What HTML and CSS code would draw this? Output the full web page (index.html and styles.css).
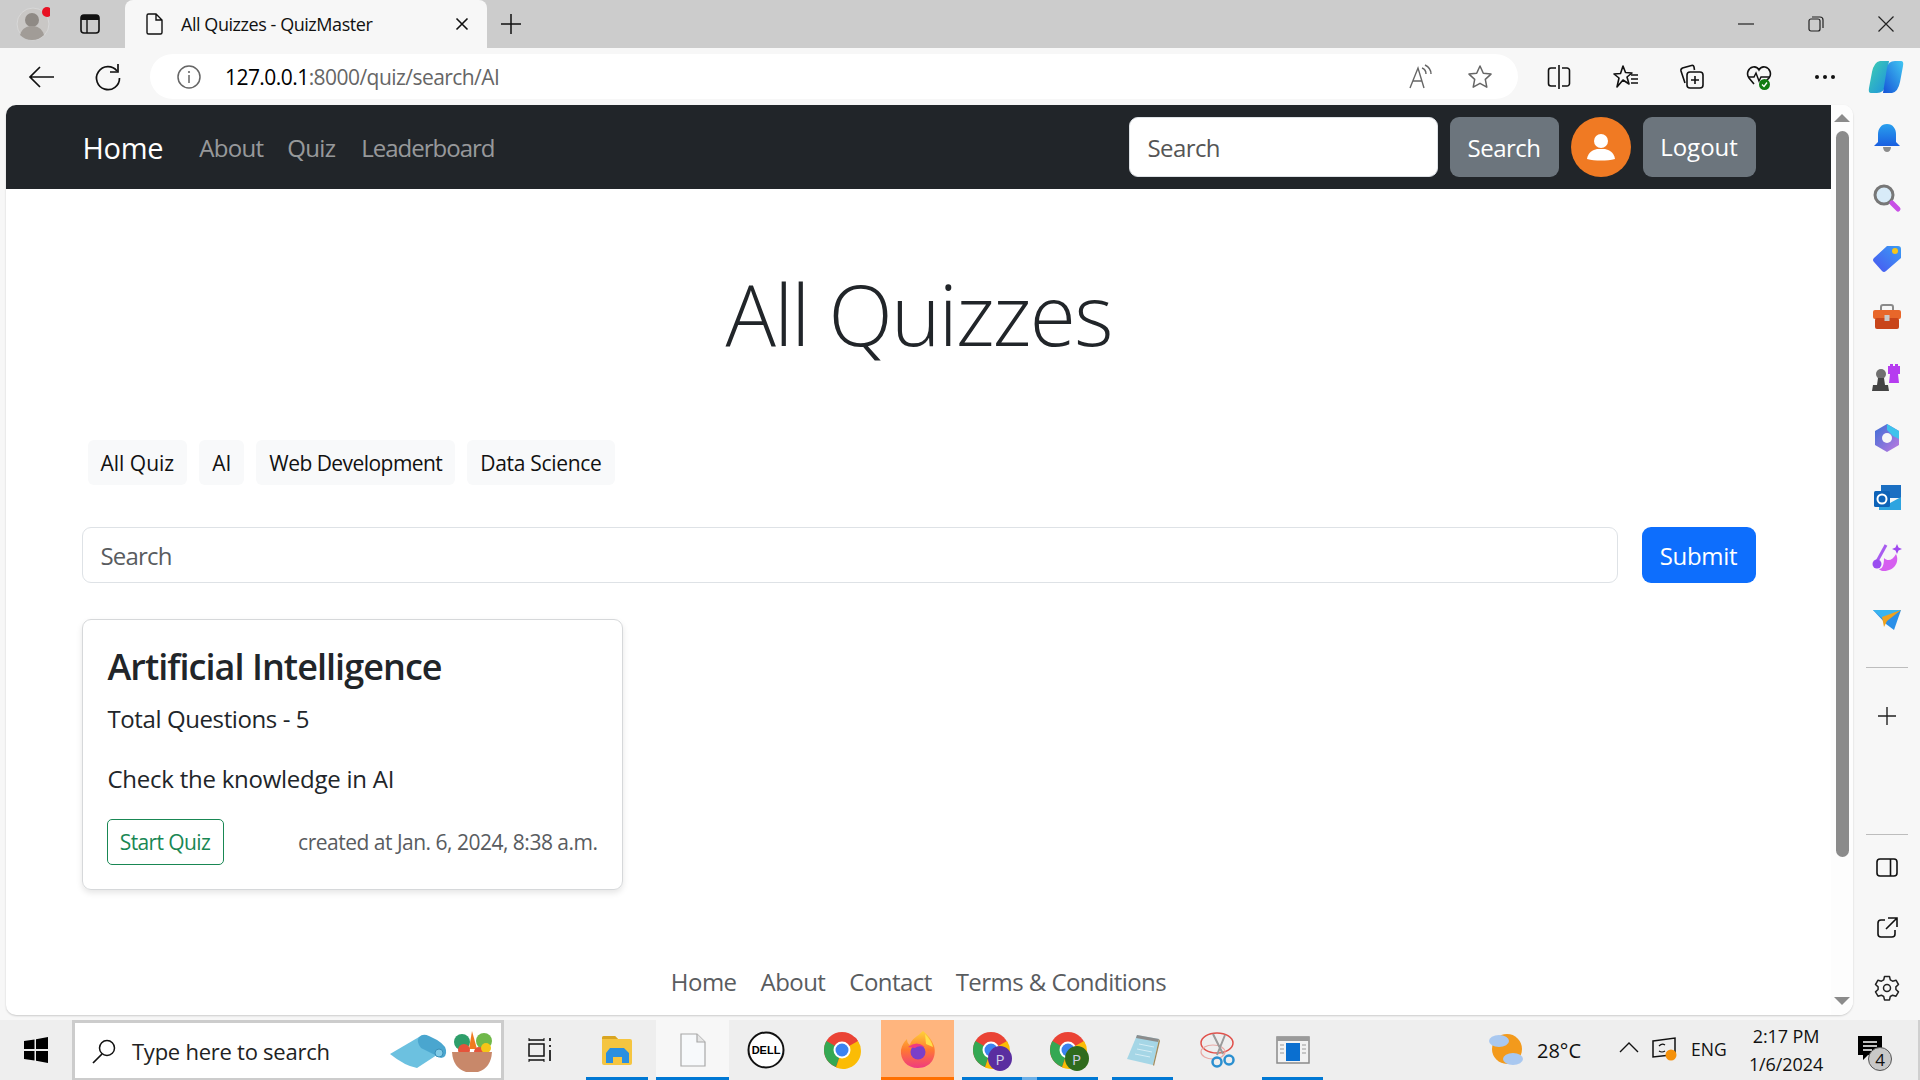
FILE: index.html
```html
<!DOCTYPE html>
<html lang="en">
<head>
<meta charset="utf-8">
<title>All Quizzes - QuizMaster</title>
<link rel="stylesheet" href="styles.css">
</head>
<body>
<div class="tabstrip">
  <div class="tab-avatar">
    <svg class="ico34" viewBox="0 0 34 34"><circle cx="17" cy="17" r="16" fill="#c9c7c5" stroke="#d8d8d8"/><circle cx="16" cy="13" r="7" fill="#8f8a85"/><path d="M4 28c2-7 7-9 12-9s10 2 12 9c-3 3-7 5-12 5s-9-2-12-5z" fill="#a19c97"/><circle cx="31" cy="5" r="5" fill="#e81123"/></svg>
  </div>
  <div class="tab-actions">
    <svg class="ico24" viewBox="0 0 24 24"><rect x="3" y="3" width="18" height="18" rx="3" fill="none" stroke="#111" stroke-width="1.6"/><path d="M3 6a3 3 0 0 1 3-3h12a3 3 0 0 1 3 3v2H3z" fill="#111"/><path d="M9 8v13" stroke="#111" stroke-width="1.4"/></svg>
  </div>
  <div class="tab">
    <svg class="ico24" viewBox="0 0 24 24"><path d="M5 3.5a1.5 1.5 0 0 1 1.5-1.500H14l6 6v12.500a1.500 1.500 0 0 1-1.500 1.500h-12A1.500 1.500 0 0 1 5 20.500zM14 2v6h6" fill="none" stroke="#111" stroke-width="1.4"/></svg>
    <span class="tab-title">All Quizzes - QuizMaster</span>
    <svg class="ico14" viewBox="0 0 14 14"><path d="M1.500 1.500l11 11M12.500 1.500l-11 11" stroke="#111" stroke-width="1.600"/></svg>
  </div>
  <div class="tab-new">
    <svg class="ico24" viewBox="0 0 24 24"><path d="M12 2v20M2 12h20" stroke="#111" stroke-width="1.500"/></svg>
  </div>
  <div class="win-controls">
    <svg class="ico16" viewBox="0 0 16 16"><path d="M0 8h16" stroke="#222" stroke-width="1.200"/></svg>
    <svg class="ico16" viewBox="0 0 16 16"><rect x="1" y="3" width="11" height="12" rx="2" fill="none" stroke="#222" stroke-width="1.200"/><path d="M4 1h8a3 3 0 0 1 3 3v8" fill="none" stroke="#222" stroke-width="1.200"/></svg>
    <svg class="ico16" viewBox="0 0 16 16"><path d="M0.500 0.500l15 15M15.500 0.500l-15 15" stroke="#222" stroke-width="1.200"/></svg>
  </div>
</div>

<div class="toolbar">
  <div class="tool-nav">
    <svg class="ico30" viewBox="0 0 30 30"><path d="M27 15H3M13 5L3 15l10 10" fill="none" stroke="#111" stroke-width="1.700"/></svg>
    <svg class="ico30" viewBox="0 0 30 30"><path d="M24 9a11.500 11.500 0 1 0 2.500 7" fill="none" stroke="#111" stroke-width="1.700"/><path d="M25 2v8h-8" fill="none" stroke="#111" stroke-width="1.700"/></svg>
  </div>
  <div class="addressbar">
    <svg class="ico26" viewBox="0 0 26 26"><circle cx="13" cy="13" r="11" fill="none" stroke="#666" stroke-width="1.500"/><path d="M13 11v8" stroke="#666" stroke-width="1.500"/><circle cx="13" cy="8" r="1.100" fill="#666"/></svg>
    <div class="url"><span class="url-host">127.0.0.1</span>:8000/quiz/search/AI</div>
    <svg class="ico26 read-ico" viewBox="0 0 26 26"><path d="M2 24L10 4l6 20M5 17h9" fill="none" stroke="#666" stroke-width="1.400"/><path d="M14 4c3 1 4 3 4 6M17 1c4 2 6 5 6 9" fill="none" stroke="#666" stroke-width="1.400"/></svg>
    <svg class="ico26 star-ico" viewBox="0 0 26 26"><path d="M13 2l3.300 7.200 7.700.9-5.700 5.300 1.500 7.800L13 19.300l-6.800 3.900 1.500-7.800L2 10.100l7.700-.9z" fill="none" stroke="#666" stroke-width="1.500" stroke-linejoin="round"/></svg>
  </div>
  <div class="tool-right">
    <div class="tool-slot"><svg class="ico26" viewBox="0 0 26 26"><path d="M10 4H5a2.500 2.500 0 0 0-2.500 2.500v13A2.500 2.500 0 0 0 5 22h5M16 4h5a2.500 2.500 0 0 1 2.500 2.500v13A2.500 2.500 0 0 1 21 22h-5M13 1v24" fill="none" stroke="#111" stroke-width="1.600"/></svg></div>
    <div class="tool-slot"><svg class="ico26" viewBox="0 0 26 26"><path d="M10 2l2.500 6.500L19 9l-5 4 2 7-6-4-6 7 2-9-5-4 6.500-.5z" fill="none" stroke="#111" stroke-width="1.600" stroke-linejoin="round"/><path d="M18 11h7M18 15h7M18 19h7" stroke="#111" stroke-width="1.600"/></svg></div>
    <div class="tool-slot"><svg class="ico26" viewBox="0 0 26 26"><path d="M6 19L2 7q-.5-2 1.500-3l9-2.500q2-.5 2.500 1.500l.5 3" fill="none" stroke="#111" stroke-width="1.600"/><rect x="8" y="8" width="16" height="16" rx="3" fill="#f7f7f7" stroke="#111" stroke-width="1.600"/><path d="M16 12v8M12 16h8" stroke="#111" stroke-width="1.600"/></svg></div>
    <div class="tool-slot"><svg class="ico26" viewBox="0 0 26 26"><path d="M8 20L3 14C0 10 2 4 7 3c3-.5 5 1 6 3 1-2 3-3.500 6-3 5 1 7 7 4 11l-4 4" fill="none" stroke="#111" stroke-width="1.600"/><path d="M2 13h6l2-4 3 8 2-4h8" fill="none" stroke="#111" stroke-width="1.500"/><circle cx="18.500" cy="20.500" r="5.500" fill="#107c10"/><path d="M16 20.500l2 2 3-4" fill="none" stroke="#fff" stroke-width="1.300"/></svg></div>
    <div class="tool-slot"><svg class="ico26" viewBox="0 0 26 26"><circle cx="5" cy="13" r="2" fill="#111"/><circle cx="13" cy="13" r="2" fill="#111"/><circle cx="21" cy="13" r="2" fill="#111"/></svg></div>
    <div class="tool-slot tool-copilot"><svg class="ico36" viewBox="0 0 36 36"><defs><linearGradient id="cpa" x1="0" y1="0" x2="1" y2="1"><stop offset="0" stop-color="#3fd0b0"/><stop offset="1" stop-color="#1d8fe0"/></linearGradient><linearGradient id="cpb" x1="0" y1="1" x2="1" y2="0"><stop offset="0" stop-color="#1553d8"/><stop offset="1" stop-color="#41c7f2"/></linearGradient></defs><path d="M12 2h9l-4 25q-1 7-8 7H3q-3 0-2-5l3-16Q6 3 12 2z" fill="url(#cpa)"/><path d="M24 34h-9l4-25q1-7 8-7h6q3 0 2 5l-3 16q-2 10-8 11z" fill="url(#cpb)"/></svg></div>
  </div>
</div>

<div class="window-body">
  <div class="viewport">
    <div class="page">
      <nav class="navbar">
        <div class="container nav-inner">
          <a class="brand">Home</a>
          <a class="nav-link">About</a>
          <a class="nav-link">Quiz</a>
          <a class="nav-link nav-lead">Leaderboard</a>
          <div class="nav-right">
            <div class="nav-search">Search</div>
            <div class="btn-gray btn-search">Search</div>
            <div class="avatar">
              <svg class="ico30" viewBox="0 0 30 30"><circle cx="15" cy="9" r="7" fill="#fff"/><path d="M1 27c1-7 6-9 10-10h8c4 1 9 3 10 10-8 2-20 2-28 0z" fill="#fff"/></svg>
            </div>
            <div class="btn-gray btn-logout">Logout</div>
          </div>
        </div>
      </nav>
      <main class="container">
        <h1 class="title">All Quizzes</h1>
        <div class="pills">
          <span class="pill">All Quiz</span>
          <span class="pill">AI</span>
          <span class="pill pill-w">Web Development</span>
          <span class="pill pill-d">Data Science</span>
        </div>
        <div class="search-row">
          <div class="search-input">Search</div>
          <div class="btn-submit">Submit</div>
        </div>
        <div class="card">
          <h2 class="card-title">Artificial Intelligence</h2>
          <p class="card-count">Total Questions - 5</p>
          <p class="card-desc">Check the knowledge in AI</p>
          <div class="card-foot">
            <span class="btn-start">Start Quiz</span>
            <span class="created">created at Jan. 6, 2024, 8:38 a.m.</span>
          </div>
        </div>
      </main>
      <footer class="footer">
        <a>Home</a><a>About</a><a>Contact</a><a>Terms &amp; Conditions</a>
      </footer>
    </div>
    <div class="scrollbar">
      <span class="arrow-up"></span>
      <span class="thumb"></span>
      <span class="arrow-down"></span>
    </div>
  </div>
  <aside class="sidebar">
    <div class="side-slot"><svg class="ico30" viewBox="0 0 30 30"><defs><linearGradient id="bell" x1="0" y1="0" x2="0" y2="1"><stop offset="0" stop-color="#29a0ee"/><stop offset="1" stop-color="#1a5fe0"/></linearGradient></defs><path d="M15 1c6 0 9 5 9 10v8l4 4H2l4-4v-8C6 6 9 1 15 1z" fill="url(#bell)"/><path d="M11 24h8c0 3-2 5-4 5s-4-2-4-5z" fill="#8c8c8c"/></svg></div>
    <div class="side-slot"><svg class="ico30" viewBox="0 0 30 30"><circle cx="12" cy="12" r="9" fill="#d8ebf8" stroke="#777" stroke-width="3"/><path d="M20 20l6 6" stroke="#c84fe6" stroke-width="5" stroke-linecap="round"/></svg></div>
    <div class="side-slot"><svg class="ico30" viewBox="0 0 30 30"><defs><linearGradient id="tag" x1="0" y1="1" x2="1" y2="0"><stop offset="0" stop-color="#4a55f0"/><stop offset="1" stop-color="#3a9df5"/></linearGradient></defs><path d="M15 3h11q3 0 3 3v9L14 28q-2 2-4 0L2 19q-2-2 0-4z" fill="url(#tag)"/><circle cx="23" cy="8" r="3" fill="#f5c518"/></svg></div>
    <div class="side-slot"><svg class="ico30" viewBox="0 0 30 30"><path d="M9 8V4q0-2 2-2h8q2 0 2 2v4" fill="none" stroke="#8a8a8a" stroke-width="2"/><rect x="1" y="7" width="28" height="9" rx="2" fill="#e8672a"/><rect x="3" y="15" width="24" height="11" rx="2" fill="#c8451a"/><rect x="12.500" y="12" width="5" height="6" fill="#c9c9c9"/></svg></div>
    <div class="side-slot"><svg class="ico30" viewBox="0 0 30 30"><path d="M18 1h3v2h2V1h3v2h2v8h-2l1 9h-10l1-9h-2V3h2z" fill="#b63cf0"/><circle cx="9" cy="11" r="5" fill="#707070"/><path d="M6 15h6l1 7h3l1 6H0l1-6h4z" fill="#444"/></svg></div>
    <div class="side-slot"><svg class="ico30" viewBox="0 0 30 30"><defs><linearGradient id="msa" x1="0" y1="0" x2="1" y2="1"><stop offset="0" stop-color="#3b6fd6"/><stop offset="1" stop-color="#c07ae0"/></linearGradient></defs><path d="M15 1l12 7v14l-12 7-12-7V8z" fill="url(#msa)"/><path d="M15 1l12 7v8l-6-3-6-6z" fill="#3ec2ec"/><circle cx="15" cy="15" r="5" fill="#f7f7f7"/></svg></div>
    <div class="side-slot"><svg class="ico30" viewBox="0 0 30 30"><rect x="9" y="2" width="20" height="13" fill="#1b6fc2"/><path d="M7 14l11 6 11-6v13H7z" fill="#2ea4e0"/><rect x="2" y="8" width="16" height="16" rx="1.500" fill="#0d63b8"/><circle cx="10" cy="16" r="4.500" fill="none" stroke="#fff" stroke-width="2"/></svg></div>
    <div class="side-slot"><svg class="ico30" viewBox="0 0 30 30"><path d="M3 22L14 2" stroke="#a95cf0" stroke-width="3"/><circle cx="5" cy="21" r="4.500" fill="#9a4df0"/><path d="M12 15c4 4 9 2 12-4 4 8-2 17-12 17-4 0-5-2-5-2 3 0 5-3 5-11z" fill="#d65ff0"/><path d="M25 1l1.500 3.500L30 6l-3.500 1.500L25 11l-1.500-3.500L20 6l3.500-1.500z" fill="#a048f0"/></svg></div>
    <div class="side-slot"><svg class="ico30" viewBox="0 0 30 30"><path d="M1 7h28L22 27l-8-6z" fill="#2a8fe8"/><path d="M1 7h28L10 15z" fill="#3ab4ee"/><path d="M29 7L10 14l2 10 3-6z" fill="#f0a21e"/></svg></div>
    <div class="side-rule"></div>
    <div class="side-slot side-plus"><svg class="ico20" viewBox="0 0 20 20"><path d="M10 1v18M1 10h18" stroke="#222" stroke-width="1.400"/></svg></div>
    <div class="side-rule side-rule-low"></div>
    <div class="side-slot side-util"><svg class="ico22" viewBox="0 0 22 22"><rect x="1" y="2" width="20" height="17" rx="3" fill="none" stroke="#111" stroke-width="1.600"/><path d="M14.500 2v17" stroke="#111" stroke-width="1.600"/></svg></div>
    <div class="side-slot"><svg class="ico22" viewBox="0 0 22 22"><path d="M9 3H5a3 3 0 0 0-3 3v11a3 3 0 0 0 3 3h11a3 3 0 0 0 3-3v-4" fill="none" stroke="#111" stroke-width="1.600"/><path d="M12 1h9v9M21 1L10 12" fill="none" stroke="#111" stroke-width="1.600"/></svg></div>
    <div class="side-slot"><svg class="ico26" viewBox="0 0 26 26"><path d="M10.500 1.500h5l.8 3.400 2.300 1.300 3.400-1 2.500 4.300-2.600 2.400v2.600l2.600 2.400-2.500 4.300-3.400-1-2.300 1.300-.8 3.400h-5l-.8-3.400-2.300-1.300-3.400 1-2.500-4.300 2.600-2.400v-2.600L1.500 9.500 4 5.200l3.400 1 2.300-1.300z" fill="none" stroke="#222" stroke-width="1.500" stroke-linejoin="round"/><circle cx="13" cy="13" r="3.500" fill="none" stroke="#222" stroke-width="1.500"/></svg></div>
  </aside>
</div>

<div class="taskbar">
  <div class="tb-start"><svg class="ico26" viewBox="0 0 26 26"><path d="M1 4l10.500-1.500V12H1zM13 2.200L25 0v12H13zM1 14h10.500v9.500L1 22zM13 14h12v12l-12-2.200z" fill="#000"/></svg></div>
  <div class="tb-search">
    <svg class="ico26" viewBox="0 0 26 26"><circle cx="16" cy="10" r="7.500" fill="none" stroke="#111" stroke-width="1.500"/><path d="M11 16L2 25" stroke="#111" stroke-width="1.700"/></svg>
    <span class="tb-search-text">Type here to search</span>
    <svg class="tb-mat" viewBox="0 0 58 36"><path d="M1 21L30 4l24 14-26 17q-12-2-27-14z" fill="#6cc1e0"/><path d="M30 4q-3 5 2 11l20 10q6-1 5-8T40 3q-6-3-10 1z" fill="#4aa6cf"/><circle cx="50" cy="20" r="4" fill="#82cbe6" stroke="#3a8fb8"/></svg>
    <svg class="tb-bowl" viewBox="0 0 46 46"><circle cx="13" cy="14" r="8" fill="#2e9e6a"/><path d="M23 3l5 18h-8z" fill="#f07a20"/><circle cx="35" cy="13" r="8" fill="#6fb84a"/><circle cx="15" cy="22" r="6" fill="#e5533a"/><circle cx="30" cy="24" r="5" fill="#e5533a"/><circle cx="37" cy="20" r="5" fill="#f5c518"/><path d="M3 24h40q-1 16-14 20H17Q4 40 3 24z" fill="#c8886a"/></svg>
  </div>
  <div class="tb-taskview"><svg class="ico26" viewBox="0 0 26 26"><path d="M2 3h15M2 23h15" stroke="#111" stroke-width="1.500"/><path d="M2 25v-3M17 25v-3M2 1v3M17 1v3" stroke="#111" stroke-width="1"/><rect x="2" y="7" width="15" height="12" fill="none" stroke="#111" stroke-width="1.500"/><path d="M23 1v3M23 8v2M23 13v11" stroke="#111" stroke-width="1.700"/></svg></div>
  <div class="tb-app tb-w62 on"><svg class="ico34" viewBox="0 0 34 34"><path d="M2 5q0-2 2-2h11l3 3h12q2 0 2 2v22q0 2-2 2H4q-2 0-2-2z" fill="#f5c540"/><path d="M2 5q0-2 2-2h11l3 3H2z" fill="#d9a521"/><path d="M10 15h14l5 5v10h-7v-6h-9v6H6V20z" fill="#2a8fe0"/></svg></div>
  <div class="tb-app tb-w73 on active"><svg class="tb-doc" viewBox="0 0 26 34"><path d="M1 1h16l8 8v24H1z" fill="#f7f9fb" stroke="#a8a8a8" stroke-width="1.200"/><path d="M17 1v8h8" fill="#e6e6e6" stroke="#a8a8a8" stroke-width="1.200"/></svg></div>
  <div class="tb-app tb-w74"><svg class="ico38" viewBox="0 0 38 38"><circle cx="19" cy="19" r="17.500" fill="#fff" stroke="#111" stroke-width="2"/><text class="dell" x="19" y="23" text-anchor="middle">DELL</text></svg></div>
  <div class="tb-app tb-w76"><svg class="ico38" viewBox="0 0 38 38"><circle cx="19" cy="19" r="18" fill="#ea4335"/><path d="M19 19L3.400 10A18 18 0 0 0 13 36z" fill="#34a853"/><path d="M19 19l16-9A18 18 0 0 1 13 36.500z" fill="#fbbc05"/><path d="M19 10h16l-2-3-10-4-6 1-8 6z" fill="#ea4335"/><circle cx="19" cy="19" r="8.500" fill="#fff"/><circle cx="19" cy="19" r="6.500" fill="#3b82f0"/></svg></div>
  <div class="tb-app tb-ff"><svg class="ico38" viewBox="0 0 38 38"><defs><linearGradient id="ffa" x1="0" y1="0" x2="0" y2="1"><stop offset="0" stop-color="#ffd23a"/><stop offset=".5" stop-color="#ff7a30"/><stop offset="1" stop-color="#f03a80"/></linearGradient></defs><path d="M24 0c5 4 9 9 11 15 3 11-3 22-16 22C8 37 1 29 2 19 3 14 5 11 8 8c0 3 1 5 3 6 1-6 7-8 13-14z" fill="url(#ffa)"/><path d="M26 3c4 4 7 8 8 13l-7-3z" fill="#ffe04a"/><circle cx="19" cy="21" r="7.500" fill="#7b3fc9"/><path d="M9 16q9-7 17 0-7-2-10 1z" fill="#f03a80"/></svg></div>
  <div class="tb-app tb-cp on split">
    <svg class="ico38" viewBox="0 0 38 38"><circle cx="19" cy="19" r="18" fill="#ea4335"/><path d="M19 19L3.400 10A18 18 0 0 0 13 36z" fill="#34a853"/><path d="M19 19l16-9A18 18 0 0 1 13 36.500z" fill="#fbbc05"/><circle cx="19" cy="19" r="8.500" fill="#fff"/><circle cx="19" cy="19" r="6.500" fill="#3b82f0"/></svg>
    <span class="profile purple">P</span>
  </div>
  <div class="tb-app tb-w61 on">
    <svg class="ico38" viewBox="0 0 38 38"><circle cx="19" cy="19" r="18" fill="#ea4335"/><path d="M19 19L3.400 10A18 18 0 0 0 13 36z" fill="#34a853"/><path d="M19 19l16-9A18 18 0 0 1 13 36.500z" fill="#fbbc05"/><circle cx="19" cy="19" r="8.500" fill="#fff"/><circle cx="19" cy="19" r="6.500" fill="#3b82f0"/></svg>
    <span class="profile green">P</span>
  </div>
  <div class="tb-gap"></div>
  <div class="tb-app tb-w61 on"><svg class="ico38" viewBox="0 0 38 38"><path d="M3 28L13 4l22 4-6 26z" fill="#a5d6e6"/><path d="M13 4l22 4-1 3-22-4z" fill="#8c8c8c"/><path d="M29 34l6-26 1 2-6 25z" fill="#a08a5a"/><path d="M15 13l15 3M13 18l15 3M11 23l15 3" stroke="#d5edf5"/></svg></div>
  <div class="tb-app tb-w89"><svg class="ico38" viewBox="0 0 38 38"><ellipse cx="18" cy="12" rx="16" ry="10" fill="none" stroke="#e0504a" stroke-width="1.500"/><ellipse cx="14" cy="21" rx="12" ry="7" fill="none" stroke="#e8a8a4" stroke-width="1.200"/><path d="M14 3l10 20M26 4L18 24" stroke="#9a9a9a" stroke-width="2"/><circle cx="18" cy="31" r="4.500" fill="none" stroke="#2a8fd0" stroke-width="2.500"/><circle cx="30" cy="29" r="4.500" fill="none" stroke="#2a8fd0" stroke-width="2.500"/></svg></div>
  <div class="tb-app tb-w61 on"><svg class="ico34" viewBox="0 0 34 34"><rect x="1" y="4" width="32" height="26" fill="#f2f2f2" stroke="#8a8a8a" stroke-width="1.500"/><rect x="1" y="4" width="32" height="4" fill="#9a9a9a"/><rect x="10" y="10" width="14" height="18" fill="#0a6fd0"/><path d="M4 12h4M4 16h4M4 20h4M26 12h4M26 16h4M26 20h4" stroke="#9a9a9a"/></svg></div>
  <div class="tray">
    <svg class="tray-weather" viewBox="0 0 38 38"><circle cx="20" cy="19" r="15" fill="#f39a1c"/><ellipse cx="12" cy="11" rx="10" ry="6" fill="#a9c8f0"/><ellipse cx="26" cy="29" rx="10" ry="6" fill="#a9c8f0"/></svg>
    <span class="tray-temp">28°C</span>
    <svg class="tray-caret" viewBox="0 0 20 12"><path d="M1 11l9-9 9 9" fill="none" stroke="#111" stroke-width="1.400"/></svg>
    <svg class="tray-sync" viewBox="0 0 26 26"><path d="M2 5l22-3v16l-4 1v0L2 21z" fill="none" stroke="#111" stroke-width="1.500"/><path d="M8 10q3-3 6-1M14 15q-3 2-6 0" fill="none" stroke="#111" stroke-width="1.200"/><circle cx="20" cy="19" r="5.500" fill="#f5910a"/></svg>
    <span class="tray-lang">ENG</span>
    <div class="tray-clock"><span>2:17 PM</span><span>1/6/2024</span></div>
    <div class="tray-note">
      <svg class="ico26" viewBox="0 0 26 26"><path d="M1 1h24v19H11l-5 5v-5H1z" fill="#000"/><path d="M6 7h14M6 11h14M6 15h9" stroke="#fff" stroke-width="1.300"/></svg>
      <span class="note-badge">4</span>
    </div>
  </div>
</div>
</body>
</html>
```

FILE: styles.css
```css
* { box-sizing: border-box; }
html, body { margin: 0; height: 100%; }
body {
  display: flex; flex-direction: column; height: 1080px; overflow: hidden;
  font-family: "Open Sans", "Noto Sans", sans-serif; font-stretch: 88%;
  background: #f7f7f7; color: #212529;
}
svg { display: block; flex: none; }
.ico14 { width: 14px; height: 14px; }
.ico16 { width: 16px; height: 16px; }
.ico20 { width: 20px; height: 20px; }
.ico22 { width: 22px; height: 22px; }
.ico24 { width: 24px; height: 24px; }
.ico26 { width: 26px; height: 26px; }
.ico30 { width: 30px; height: 30px; }
.ico34 { width: 34px; height: 34px; }
.ico36 { width: 36px; height: 36px; }
.ico38 { width: 38px; height: 38px; }

/* tab strip */
.tabstrip { height: 48px; background: #cccccc; display: flex; align-items: center; flex: none; }
.tab-avatar { width: 66px; display: flex; justify-content: center; }
.tab-actions { width: 48px; display: flex; justify-content: center; }
.tab {
  margin-left: 11px; width: 362px; height: 48px; background: #f7f7f7; border-radius: 8px 8px 0 0;
  display: flex; align-items: center; padding: 0 18px 0 17px; color: #111;
}
.tab-title { font-size: 18px; margin-left: 15px; flex: 1; font-weight: 400; letter-spacing: -0.45px; }
.tab-new { width: 48px; display: flex; justify-content: center; }
.win-controls { margin-left: auto; display: flex; gap: 54px; padding-right: 26px; }

/* toolbar */
.toolbar { height: 57px; flex: none; display: flex; align-items: center; background: #f7f7f7; }
.tool-nav { width: 150px; display: flex; gap: 36px; padding-left: 27px; }
.addressbar {
  width: 1368px; height: 45px; background: #fff; border-radius: 23px;
  display: flex; align-items: center; padding-left: 26px;
}
.url { font-size: 21px; color: #666; margin-left: 23px; flex: 1; letter-spacing: -0.55px; }
.url-host { color: #000; }
.read-ico { margin-right: 33px; }
.star-ico { margin-right: 25px; }
.tool-right { flex: 1; display: flex; padding-left: 8px; }
.tool-slot { width: 66.500px; display: flex; justify-content: center; align-items: center; }
.tool-copilot { width: 54px; }

/* window body */
.window-body { flex: 1; display: flex; min-height: 0; }
.viewport {
  margin-left: 6px; width: 1847px; height: 910px; background: #fff; display: flex;
  border-radius: 10px 10px 14px 10px; overflow: hidden; box-shadow: 0 1px 2px rgba(0,0,0,.18);
}
.page { width: 1825px; height: 910px; overflow: hidden; }
.scrollbar { flex: 1; position: relative; display: flex; flex-direction: column; align-items: center; padding: 3px 0 10px 0; background: #fdfdfd; }
.arrow-up { width: 0; height: 0; border: 8px solid transparent; border-top: 0; border-bottom: 8px solid #8b8b8b; margin-top: 6px; }
.arrow-down { width: 0; height: 0; border: 8px solid transparent; border-bottom: 0; border-top: 8px solid #8b8b8b; margin-top: auto; }
.thumb { width: 13px; height: 726px; background: #8b8b8b; border-radius: 7px; margin-top: 9px; }

/* site */
.container { width: 1674px; margin: 0 auto; }
.navbar { height: 84px; background: #212529; }
.nav-inner { display: flex; align-items: center; height: 84px; }
.brand { font-size: 29px; color: #fff; margin: 0 36px 0 1px; font-weight: 400; letter-spacing: -0.3px; }
.nav-link { font-size: 24px; color: rgba(255,255,255,.55); margin-right: 24px; letter-spacing: -0.7px; }
.nav-lead { margin-left: 2px; letter-spacing: -1px; }
.nav-right { margin-left: auto; display: flex; align-items: center; gap: 12px; }
.nav-search {
  width: 309px; height: 60px; background: #fff; border-radius: 9px; border: 1px solid #dee2e6;
  font-size: 24px; padding: 0 18px; display: flex; align-items: center; color: #555; letter-spacing: -0.6px;
}
.btn-gray {
  height: 60px; background: #6c757d; color: #fff; border-radius: 9px; font-size: 24px;
  display: flex; align-items: center; justify-content: center;
}
.btn-search { width: 109px; letter-spacing: -0.5px; }
.btn-logout { width: 113px; padding-bottom: 2px; }
.avatar { width: 60px; height: 60px; border-radius: 50%; background: #f07a23; display: flex; align-items: center; justify-content: center; }
.title { margin: 70px 0 71px; font-size: 84px; line-height: 110px; font-weight: 300; text-align: center; color: #212529; letter-spacing: -1.8px; }
.pills { display: flex; gap: 12px; padding-left: 6px; margin-bottom: 42px; }
.pill { height: 45px; padding: 0 13px; background: #f8f9fa; border-radius: 6px; display: flex; align-items: center; font-size: 21px; color: #111; }
.pill-w { letter-spacing: -0.55px; }
.pill-d { letter-spacing: -0.3px; }
.search-row { display: flex; gap: 24px; margin-bottom: 36px; }
.search-input {
  flex: 1; height: 56px; border: 1px solid #dee2e6; border-radius: 9px; padding: 0 18px;
  display: flex; align-items: center; font-size: 24px; color: #595c5f; letter-spacing: -0.8px;
}
.btn-submit { width: 114px; height: 56px; background: #0d6efd; color: #fff; border-radius: 9px; font-size: 24px; display: flex; align-items: center; justify-content: center; letter-spacing: -0.3px; }
.card {
  width: 541px; height: 271px; border: 1px solid #d6d8da; border-radius: 9px; padding: 24px 24px 0;
  box-shadow: 0 3px 6px rgba(0,0,0,.1); display: flex; flex-direction: column;
}
.card-title { margin: 0; font-size: 36px; line-height: 46px; font-weight: 600; color: #212529; letter-spacing: -0.95px; padding-left: 1px; }
.card-count { margin: 11px 0 0; font-size: 24px; line-height: 36px; color: #212529; letter-spacing: -0.4px; padding-left: 1px; }
.card-desc { margin: 24px 0 0; font-size: 24px; line-height: 36px; color: #212529; letter-spacing: -0.25px; padding-left: 1px; }
.card-foot { margin-top: 22px; display: flex; align-items: center; justify-content: space-between; }
.btn-start { width: 117px; height: 46px; border: 1px solid #198754; border-radius: 5px; color: #198754; font-size: 21px; display: flex; align-items: center; justify-content: center; letter-spacing: -0.6px; }
.created { font-size: 21px; color: #595c5f; letter-spacing: -0.5px; }
.footer { margin-top: 76px; display: flex; justify-content: center; gap: 24px; font-size: 24px; line-height: 32px; color: #595c5f; letter-spacing: -0.55px; }

/* sidebar */
.sidebar { flex: 1; display: flex; flex-direction: column; align-items: center; padding-top: 3px; }
.side-slot { height: 60px; width: 100%; display: flex; align-items: center; justify-content: center; flex: none; }
.side-rule { width: 42px; height: 1px; background: #bdbdbd; margin-top: 19px; flex: none; }
.side-plus { margin-top: 18px; }
.side-rule-low { margin-top: 88px; }
.side-util { margin-top: 3px; }

/* taskbar */
.taskbar { height: 60px; background: #eeeeee; display: flex; align-items: center; flex: none; position: relative; }
.tb-start { width: 72px; display: flex; justify-content: center; }
.tb-search {
  width: 432px; height: 60px; background: #fff; border: 3px solid #cccccc; border-bottom-width: 2px;
  display: flex; align-items: center; padding-left: 16px;
}
.tb-search-text { font-size: 22px; margin-left: 15px; color: #222; flex: 1; letter-spacing: -0.25px; }
.tb-mat { width: 58px; height: 36px; margin-right: 2px; }
.tb-bowl { width: 46px; height: 46px; margin-right: 6px; }
.tb-taskview { width: 82px; display: flex; justify-content: center; padding-right: 10px; }
.tb-app { height: 60px; display: flex; align-items: center; justify-content: center; flex: none; position: relative; }
.tb-app.on::after { content: ""; position: absolute; left: 0; right: 0; bottom: 0; height: 3px; background: #0078d4; }
.tb-app.active { background: #f7f7f7; }
.tb-w62 { width: 62px; margin-right: 8px; }
.tb-w73 { width: 73px; }
.tb-w74 { width: 74px; }
.tb-w76 { width: 78px; }
.tb-ff { width: 73px; background: #ffb57e; }
.tb-ff::after { content: ""; position: absolute; left: 0; right: 0; bottom: 0; height: 3px; background: #ff7000; }
.tb-cp { width: 75px; margin-left: 8px; justify-content: flex-start; padding-left: 10px; }
.tb-cp.split::before { content: ""; position: absolute; left: 60px; right: 0; bottom: 0; height: 3px; background: #6db0e8; z-index: 1; }
.tb-w61 { width: 61px; }
.tb-gap { width: 14px; }
.tb-w89 { width: 89px; }
.profile {
  position: absolute; width: 24px; height: 25px; border-radius: 50%; left: 50%; top: 26px; margin-left: -3px;
  color: #cfcfe8; font-size: 15px; display: flex; align-items: center; justify-content: center;
}
.tb-cp .profile { left: 26px; margin-left: 0; }
.purple { background: #5a2ea0; }
.green { background: #2f6b1e; }
.dell { font-family: "Liberation Sans", sans-serif; font-size: 11px; font-weight: 700; fill: #000; }
.tb-doc { width: 26px; height: 34px; }
.tray { margin-left: auto; display: flex; align-items: center; height: 60px; border-right: 2px solid #cfcfcf; width: 429px; position: relative; font-size: 20px; color: #111; }
.tray-weather { width: 38px; height: 38px; margin-left: -4px; margin-bottom: 3px; }
.tray-temp { margin-left: 12px; width: 62px; }
.tray-caret { width: 20px; height: 12px; margin-left: 20px; margin-bottom: 6px; }
.tray-sync { width: 26px; height: 26px; margin-left: 12px; margin-bottom: 2px; }
.tray-lang { margin-left: 14px; font-size: 17.500px; width: 50px; margin-bottom: 2px; }
.tray-clock { display: flex; flex-direction: column; align-items: center; width: 76px; font-size: 18px; line-height: 28px; margin-left: 7px; margin-bottom: 0; letter-spacing: -0.1px; }
.tray-note { position: relative; margin-left: 33px; margin-bottom: 4px; }
.note-badge {
  position: absolute; left: 11px; top: 12px; width: 24px; height: 24px; border-radius: 50%;
  background: #c8c8c8; border: 1px solid #555; color: #111; font-size: 17px; display: flex; align-items: center; justify-content: center;
}
```
